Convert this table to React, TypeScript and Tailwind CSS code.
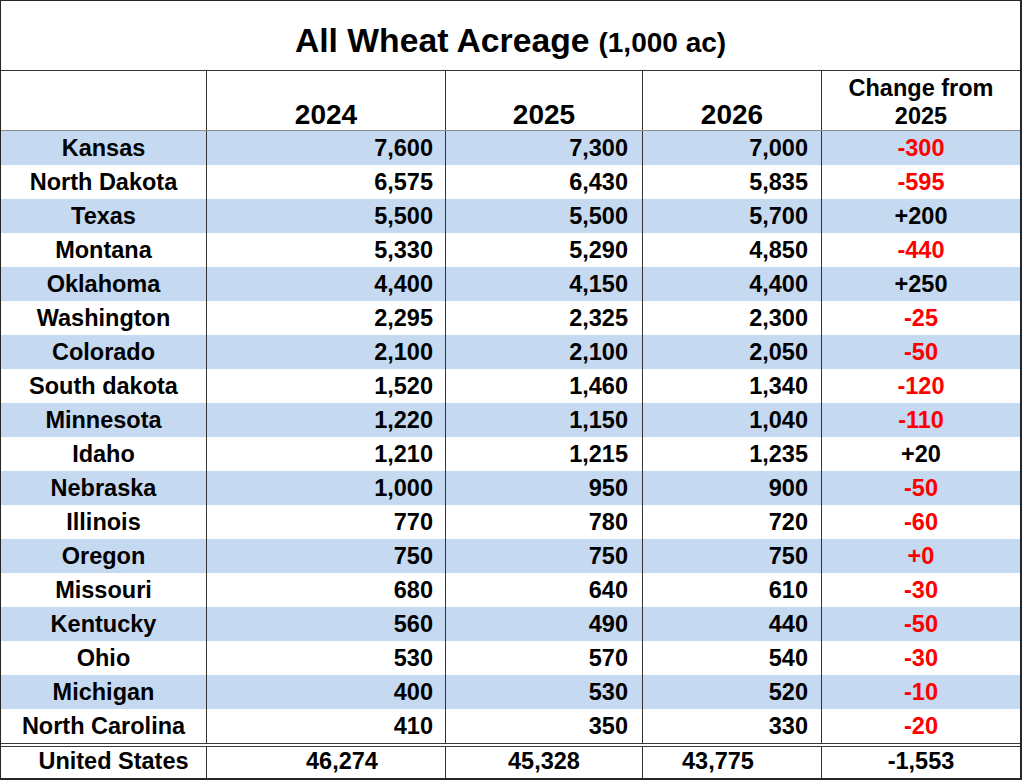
const rows: [string, string, string, string, string][] = [
  ["Kansas", "7,600", "7,300", "7,000", "-300"],
  ["North Dakota", "6,575", "6,430", "5,835", "-595"],
  ["Texas", "5,500", "5,500", "5,700", "+200"],
  ["Montana", "5,330", "5,290", "4,850", "-440"],
  ["Oklahoma", "4,400", "4,150", "4,400", "+250"],
  ["Washington", "2,295", "2,325", "2,300", "-25"],
  ["Colorado", "2,100", "2,100", "2,050", "-50"],
  ["South dakota", "1,520", "1,460", "1,340", "-120"],
  ["Minnesota", "1,220", "1,150", "1,040", "-110"],
  ["Idaho", "1,210", "1,215", "1,235", "+20"],
  ["Nebraska", "1,000", "950", "900", "-50"],
  ["Illinois", "770", "780", "720", "-60"],
  ["Oregon", "750", "750", "750", "+0"],
  ["Missouri", "680", "640", "610", "-30"],
  ["Kentucky", "560", "490", "440", "-50"],
  ["Ohio", "530", "570", "540", "-30"],
  ["Michigan", "400", "530", "520", "-10"],
  ["North Carolina", "410", "350", "330", "-20"],
];

const redChanges = ["+0"];

const cols = "grid grid-cols-[205px_239px_197px_179px_199px]";

export default function App() {
  return (
    <div
      className="w-[1024px] h-[781px] bg-white text-black font-bold"
      style={{ fontFamily: '"Liberation Sans", Arial, sans-serif' }}
    >
      <div className="w-[1022px] border-l border-t border-r-2 border-b-2 border-[#262626]">
        {/* title */}
        <div className="h-[70px] border-b border-[#333] flex justify-center items-baseline pt-[23px] leading-none">
          <span className="text-[33.7px]">All Wheat Acreage</span>
          <span className="text-[28px] ml-[9px]">(1,000 ac)</span>
        </div>

        {/* header */}
        <div className={`${cols} h-[60px] border-b border-[#8a8a8a]`}>
          <div />
          <div className="border-l border-[#333] flex items-end justify-center pb-[1px] text-[28px] leading-none">2024</div>
          <div className="border-l border-[#333] flex items-end justify-center pb-[1px] text-[28px] leading-none">2025</div>
          <div className="border-l border-[#333] flex items-end justify-center pb-[1px] text-[28px] leading-none">2026</div>
          <div className="border-l border-[#333] flex items-end justify-center text-[23.5px] leading-[28px] text-center">
            <span>
              Change from
              <br />
              2025
            </span>
          </div>
        </div>

        {/* states */}
        {rows.map((r, i) => {
          const neg = r[4].startsWith("-") || redChanges.includes(r[4]);
          return (
            <div
              key={r[0]}
              className={`${cols} h-[34px] text-[23.5px] leading-none ${i % 2 === 0 ? "bg-[#c5d9f1]" : "bg-white"}`}
            >
              <div className="flex items-center justify-center pt-[2px]">{r[0]}</div>
              <div className="border-l border-[#333] flex items-center justify-end pr-[12px] pt-[2px]">{r[1]}</div>
              <div className="border-l border-[#333] flex items-center justify-end pr-[14px] pt-[2px]">{r[2]}</div>
              <div className="border-l border-[#333] flex items-center justify-end pr-[13px] pt-[2px]">{r[3]}</div>
              <div className={`border-l border-[#333] flex items-center justify-center pt-[2px] ${neg ? "text-[#ff0000]" : ""}`}>
                {r[4]}
              </div>
            </div>
          );
        })}

        {/* double rule */}
        <div className="h-[4px] border-t border-b border-[#3a3a3a]" />

        {/* total */}
        <div className={`${cols} h-[31px] text-[23.5px] leading-none`}>
          <div className="flex items-center justify-center pl-[20px] pb-[2px]">United States</div>
          <div className="border-l border-[#333] flex items-center justify-center pl-[32px] pb-[2px]">46,274</div>
          <div className="border-l border-[#333] flex items-center justify-center pb-[2px]">45,328</div>
          <div className="border-l border-[#333] flex items-center justify-center pr-[28px] pb-[2px]">43,775</div>
          <div className="border-l border-[#333] flex items-center justify-center pb-[2px]">-1,553</div>
        </div>
      </div>
    </div>
  );
}
